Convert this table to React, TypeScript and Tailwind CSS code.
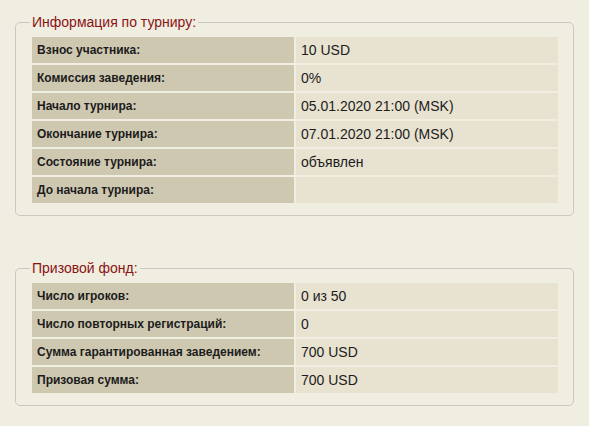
import React from 'react';

interface Row {
  label: string;
  value: string;
}

const info: Row[] = [
  { label: 'Взнос участника:', value: '10 USD' },
  { label: 'Комиссия заведения:', value: '0%' },
  { label: 'Начало турнира:', value: '05.01.2020 21:00 (MSK)' },
  { label: 'Окончание турнира:', value: '07.01.2020 21:00 (MSK)' },
  { label: 'Состояние турнира:', value: 'объявлен' },
  { label: 'До начала турнира:', value: '' }
];

const prize: Row[] = [
  { label: 'Число игроков:', value: '0 из 50' },
  { label: 'Число повторных регистраций:', value: '0' },
  { label: 'Сумма гарантированная заведением:', value: '700 USD' },
  { label: 'Призовая сумма:', value: '700 USD' }
];

function Section({ title, rows }: { title: string; rows: Row[] }) {
  return (
    <fieldset className="ml-[15px] w-[559px] rounded-[5px] border border-[#cbc8c2] pl-[16px] pr-[15px] pt-[7px] pb-[12px]">
      {/* Legend */}
      <legend className="-ml-[2px] px-[2px] text-[14px] leading-[15px] text-[#8a1414]">{title}</legend>
      <div className="flex flex-col gap-[2px]">
        {rows.map((r) => (
          <div key={r.label} className="flex h-[26px] gap-[2px]">
            <div className="flex w-[262px] items-center bg-[#cfc8b1] pl-[5px] text-[12px] font-bold text-[#1c1c1c]">
              {r.label}
            </div>
            <div className="flex w-[262px] items-center bg-[#e8e2d0] pl-[5px] text-[14px] text-[#1c1c1c]">
              {r.value}
            </div>
          </div>
        ))}
      </div>
    </fieldset>
  );
}

export default function App() {
  return (
    <div
      className="h-[426px] w-[589px] bg-[#f0ede1] pt-[15px]"
      style={{ fontFamily: '"Liberation Sans", Arial, sans-serif' }}
    >
      <Section title="Информация по турниру:" rows={info} />
      <div className="h-[45px]" />
      <Section title="Призовой фонд:" rows={prize} />
    </div>
  );
}
